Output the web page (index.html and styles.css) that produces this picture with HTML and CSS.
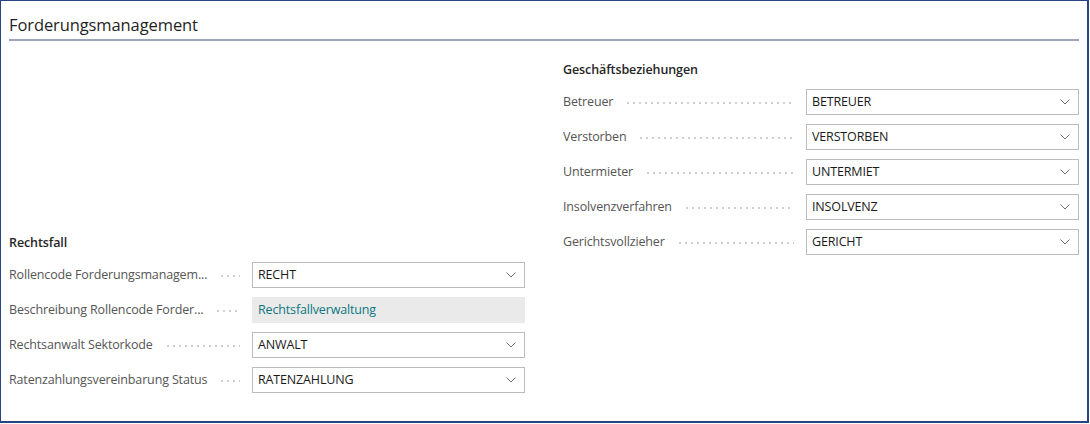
FILE: index.html
```html
<!DOCTYPE html>
<html lang="de">

<head>
    <meta charset="UTF-8">
    <meta name="viewport" content="width=device-width, initial-scale=1.0">
    <title>Forderungsmanagement</title>

    <link rel="stylesheet" href="styles.css">
</head>

<body>

    <div class="panel">
        <h2 class="titel">Forderungsmanagement</h2>

        <div class="spalten">
            <section class="gruppe gruppe-links">
                <h3>Rechtsfall</h3>

                <div class="feld">
                    <span class="label">Rollencode Forderungsmanagem...</span>
                    <div class="auswahl"><span>RECHT</span><svg width="10" height="6" viewBox="0 0 10 6"><path d="M0.5 0.5 L5 5 L9.5 0.5" /></svg></div>
                </div>
                <div class="feld">
                    <span class="label">Beschreibung Rollencode Forder...</span>
                    <div class="nurlesen">Rechtsfallverwaltung</div>
                </div>
                <div class="feld">
                    <span class="label">Rechtsanwalt Sektorkode</span>
                    <div class="auswahl"><span>ANWALT</span><svg width="10" height="6" viewBox="0 0 10 6"><path d="M0.5 0.5 L5 5 L9.5 0.5" /></svg></div>
                </div>
                <div class="feld">
                    <span class="label">Ratenzahlungsvereinbarung Status</span>
                    <div class="auswahl"><span>RATENZAHLUNG</span><svg width="10" height="6" viewBox="0 0 10 6"><path d="M0.5 0.5 L5 5 L9.5 0.5" /></svg></div>
                </div>
            </section>

            <section class="gruppe">
                <h3>Geschäftsbeziehungen</h3>

                <div class="feld">
                    <span class="label">Betreuer</span>
                    <div class="auswahl"><span>BETREUER</span><svg width="10" height="6" viewBox="0 0 10 6"><path d="M0.5 0.5 L5 5 L9.5 0.5" /></svg></div>
                </div>
                <div class="feld">
                    <span class="label">Verstorben</span>
                    <div class="auswahl"><span>VERSTORBEN</span><svg width="10" height="6" viewBox="0 0 10 6"><path d="M0.5 0.5 L5 5 L9.5 0.5" /></svg></div>
                </div>
                <div class="feld">
                    <span class="label">Untermieter</span>
                    <div class="auswahl"><span>UNTERMIET</span><svg width="10" height="6" viewBox="0 0 10 6"><path d="M0.5 0.5 L5 5 L9.5 0.5" /></svg></div>
                </div>
                <div class="feld">
                    <span class="label">Insolvenzverfahren</span>
                    <div class="auswahl"><span>INSOLVENZ</span><svg width="10" height="6" viewBox="0 0 10 6"><path d="M0.5 0.5 L5 5 L9.5 0.5" /></svg></div>
                </div>
                <div class="feld">
                    <span class="label">Gerichtsvollzieher</span>
                    <div class="auswahl"><span>GERICHT</span><svg width="10" height="6" viewBox="0 0 10 6"><path d="M0.5 0.5 L5 5 L9.5 0.5" /></svg></div>
                </div>
            </section>
        </div>
    </div>

</body>

</html>
```

FILE: styles.css
```css
* {
    padding: 0;
    margin: 0;
    box-sizing: border-box;
}

body {
    background-color: #ffffff;
    font-family: "Open Sans", "Noto Sans", sans-serif;
    color: #212121;
}

.panel {
    width: 1089px;
    height: 423px;
    border: 1px solid #28457f;
    border-right-width: 2px;
    border-bottom-width: 2px;
    padding: 0 8px 0 8px;
}

.titel {
    font-size: 16.5px;
    font-weight: 400;
    color: #1f1f1f;
    padding-top: 12px;
    height: 40px;
    border-bottom: 2px solid #9aa6b8;
    letter-spacing: -0.1px;
}

.spalten {
    display: grid;
    grid-template-columns: 516px 516px;
    column-gap: 38px;
}

.gruppe {
    padding-top: 20px;
}

.gruppe-links {
    padding-top: 193px;
}

.gruppe h3 {
    font-size: 12.5px;
    font-weight: 600;
    color: #262626;
    height: 23px;
    letter-spacing: -0.1px;
}

.feld {
    display: flex;
    align-items: center;
    height: 35px;
}

.label {
    width: 243px;
    flex-shrink: 0;
    display: flex;
    align-items: center;
    font-size: 12.5px;
    color: #555555;
    white-space: nowrap;
    overflow: hidden;
    letter-spacing: -0.15px;
    padding-right: 12px;
}

/* gepunktete Linie hinter dem Label */
.label::after {
    content: "";
    flex: 1;
    margin-left: 12px;
    height: 2px;
    margin-top: 2px;
    background-image: radial-gradient(circle, #cdcdcd 0.7px, transparent 1px);
    background-size: 6px 2px;
    background-repeat: repeat-x;
}

.auswahl,
.nurlesen {
    width: 273px;
    height: 26px;
    display: flex;
    align-items: center;
    padding: 0 6px 0 5px;
    font-size: 12.5px;
    letter-spacing: -0.15px;
}

.auswahl {
    border: 1px solid #bcbcbc;
    justify-content: space-between;
    color: #1a1a1a;
}

.auswahl svg {
    margin-right: 2px;
}

.auswahl svg path {
    fill: none;
    stroke: #6e6e6e;
    stroke-width: 1;
}

.nurlesen {
    background-color: #eaeaea;
    color: #0d7680;
    padding-left: 6px;
}
```
